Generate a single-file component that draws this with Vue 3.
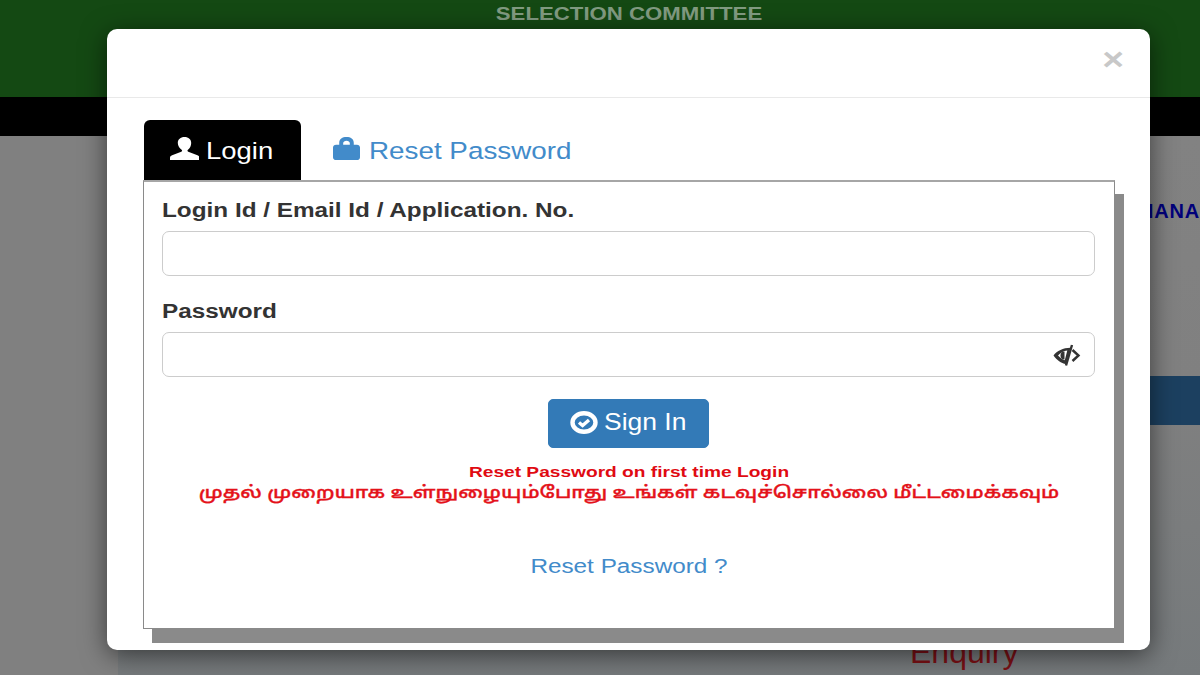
<script setup>
const tamil = 'முதல் முறையாக உள்நுழையும்போது உங்கள் கடவுச்சொல்லை மீட்டமைக்கவும்'
</script>

<template>
  <div class="page">
    <header class="top"><span class="committee">SELECTION COMMITTEE</span></header>
    <div class="nav"></div>
    <main class="main">
      <div class="sheet">
        <p class="marquee">NANA</p>
        <div class="band"></div>
        <p class="enquiry">Enquiry</p>
      </div>
    </main>

    <div class="modal">
      <div class="modal-head"><span class="close">×</span></div>
      <div class="modal-body">
        <div class="tabs">
          <a class="tab active">
            <svg class="ic-user" viewBox="0 0 26 24" preserveAspectRatio="none"><path fill="currentColor" d="M13 0c3.600 0 6 2.700 6 6.200 0 2.900-1.200 5.600-2.900 7.100-.7.700-.6 1.700.3 2.100l8.200 3.600c1.300.6 1.900 1.300 1.900 2.600V24H0v-2.400c0-1.300.6-2 1.900-2.600l8.200-3.600c.9-.4 1-1.400.3-2.100C8.700 11.800 7 9.100 7 6.200 7 2.700 9.400 0 13 0z"/></svg>
            <span class="tab-text login-text">Login</span>
          </a>
          <a class="tab">
            <svg class="ic-lock" viewBox="0 0 26 24" preserveAspectRatio="none"><path fill="currentColor" fill-rule="evenodd" d="M6 8V6c0-4 3-6 7-6s7 2 7 6v2h3c1.800 0 3 1.200 3 3v10c0 1.800-1.200 3-3 3H3c-1.800 0-3-1.200-3-3V11c0-1.800 1.200-3 3-3h3zm3.800-1.500V8h6.400V6.500c0-1.500-1.400-2.500-3.200-2.500s-3.200 1-3.200 2.500z"/></svg>
            <span class="tab-text reset-text">Reset Password</span>
          </a>
        </div>
        <form class="panel" @submit.prevent>
          <label class="lbl">Login Id / Email Id / Application. No.</label>
          <input class="field" type="text" />
          <label class="lbl lbl-pass">Password</label>
          <div class="pass-wrap">
            <input class="field" type="password" />
            <svg class="eye" viewBox="0 0 28 22">
              <path fill="#333" fill-rule="evenodd" d="M0.500 11.500C4 7 10 3.800 17.500 3.800L13 20C8 19.500 4 16 0.500 11.500ZM5 11.500c2 2.200 4.500 4 6.800 4.800l2.500-9.700C10.500 7 7.200 9 5 11.500Z"/>
              <path fill="#333" d="M11.500 7.500a4 4 0 1 0 0 8z"/>
              <path fill="none" stroke="#333" stroke-width="2.400" d="M19 1L13 21.500"/>
              <path fill="none" stroke="#333" stroke-width="2.400" d="M19.500 6l6 5.500-6 5.500"/>
            </svg>
          </div>
          <div class="actions">
            <button class="signin" type="button">
              <svg class="ic-check" viewBox="0 0 28 23" preserveAspectRatio="none"><ellipse cx="14" cy="11.500" rx="11.500" ry="9.200" fill="none" stroke="#fff" stroke-width="4.400"/><path fill="none" stroke="#fff" stroke-width="3.400" d="M9 11.500l3.600 3 6.400-5.500"/></svg>
              <span class="sign-text">Sign In</span>
            </button>
          </div>
          <p class="notice en">Reset Password on first time Login</p>
          <p class="notice ta">{{ tamil }}</p>
          <a class="reset-link">Reset Password ?</a>
        </form>
      </div>
    </div>
  </div>
</template>

<style>
html, body { margin: 0; padding: 0; overflow: hidden; }
</style>

<style scoped>
.page {
  position: relative;
  width: 1200px;
  height: 675px;
  overflow: hidden;
  display: flex;
  flex-direction: column;
  background: #808080;
  font-family: "Liberation Sans", Arial, sans-serif;
}
.top {
  height: 97px;
  flex: none;
  background: #144913;
  display: flex;
  justify-content: center;
  padding-left: 57px;
  box-sizing: border-box;
}
.committee {
  font-size: 18.500px;
  font-weight: 700;
  line-height: 27px;
  color: #829b82;
  transform: scaleX(1.2);
}
.nav { height: 39px; flex: none; background: #000; }
.main { flex: 1; display: flex; padding-left: 118px; }
.sheet {
  flex: 1;
  display: flex;
  flex-direction: column;
  background: linear-gradient(#828282 0, #808080 45%, #767a7c 100%);
}
.marquee {
  margin: 63px 0 0;
  align-self: flex-end;
  font-size: 20px;
  line-height: 24px;
  font-weight: 700;
  color: #00007a;
  letter-spacing: .8px;
}
.band { height: 49px; margin-top: 153px; background: #1c4060; }
.enquiry {
  margin: 207px 0 0 792px;
  font-size: 32px;
  line-height: 40px;
  color: #7c1015;
}
.modal {
  position: absolute;
  left: 107px;
  top: 29px;
  width: 1043px;
  height: 621px;
  background: #fff;
  border-radius: 10px;
  box-shadow: 0 5px 26px rgba(0, 0, 0, .55);
  display: flex;
  flex-direction: column;
}
.modal-head {
  height: 69px;
  flex: none;
  box-sizing: border-box;
  border-bottom: 1px solid #e9e9e9;
  display: flex;
  justify-content: flex-end;
  padding-right: 28px;
}
.close {
  font-size: 31px;
  font-weight: 700;
  line-height: 62px;
  color: #c8c8c8;
  transform: scaleX(1.2);
}
.modal-body {
  padding: 22px 0 0 36px;
  display: flex;
  flex-direction: column;
}
.tabs { display: flex; height: 60px; padding-left: 1px; }
.tab {
  display: flex;
  align-items: center;
  gap: 9px;
  box-sizing: border-box;
  height: 60px;
  padding: 0 32px;
  border-radius: 6px 6px 0 0;
  font-size: 24.500px;
  color: #428bca;
}
.tab.active {
  width: 157px;
  padding: 0 0 0 26px;
  background: #000;
  color: #fff;
  gap: 7px;
}
.tab-text { transform-origin: left center; margin-top: 1px; }
.login-text { transform: scaleX(1.12); }
.reset-text { transform: scaleX(1.135); }
.ic-user { width: 29px; height: 23px; margin-top: -3px; }
.ic-lock { width: 27px; height: 23px; margin-top: -3px; }
.panel {
  box-sizing: border-box;
  width: 972px;
  height: 449px;
  background: #fff;
  border: 1px solid #8a8a8a;
  border-top: 2px solid #a6a6a6;
  box-shadow: 9px 14px 0 #8a8a8a;
  padding: 14px 18px 0;
  display: flex;
  flex-direction: column;
}
.lbl {
  align-self: flex-start;
  font-size: 20px;
  line-height: 28px;
  font-weight: 700;
  color: #333;
  transform: scaleX(1.215);
  transform-origin: left center;
}
.lbl-pass { margin-top: 21px; }
.field {
  display: block;
  box-sizing: border-box;
  width: 933px;
  height: 45px;
  margin-top: 7px;
  border: 1px solid #ccc;
  border-radius: 7px;
  background: #fff;
  outline: none;
}
.pass-wrap { position: relative; }
.eye {
  position: absolute;
  right: 15px;
  top: 19px;
  width: 28px;
  height: 22px;
}
.actions { display: flex; justify-content: center; margin-top: 22px; padding-right: 2px; }
.signin {
  width: 161px;
  height: 49px;
  background: #337ab7;
  border: 1px solid #337ab7;
  border-radius: 5px;
  color: #fff;
  font: 24.500px "Liberation Sans", Arial, sans-serif;
  display: flex;
  align-items: center;
  justify-content: center;
  gap: 6px;
  padding: 0 6px 3px 0;
}
.sign-text { transform: scaleX(1.08); transform-origin: left center; }
.ic-check { width: 28px; height: 23px; }
.notice {
  margin: 0;
  text-align: center;
  color: #e00a12;
}
.en { margin-top: 13px; font-size: 15.500px; line-height: 21px; font-weight: 700; transform: scaleX(1.235); }
.ta { margin-top: 1px; font-size: 17px; line-height: 21px; font-weight: 500; color: #e4121a; -webkit-text-stroke: .35px #e4121a; font-family: "Noto Sans Tamil", "Noto Sans", "DejaVu Sans", sans-serif; transform: scaleX(1.215); }
.reset-link {
  margin-top: 48px;
  text-align: center;
  font-size: 20px;
  line-height: 28px;
  color: #428bca;
  transform: scaleX(1.215);
}
</style>
